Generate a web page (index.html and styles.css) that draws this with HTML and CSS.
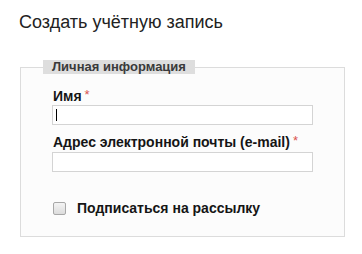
FILE: index.html
```html
<!DOCTYPE html>
<html lang="ru">
<head>
<meta charset="utf-8">
<link rel="stylesheet" href="styles.css">
</head>
<body>
<div class="page">
  <h1 class="title">Создать учётную запись</h1>
  <fieldset class="group">
    <legend class="group-legend">Личная информация</legend>
    <div class="group-body">
      <div class="field">
        <label class="field-label" for="name">Имя<span class="req">*</span></label>
        <div class="input-wrap">
          <input class="text-input" id="name" type="text">
          <span class="caret"></span>
        </div>
      </div>
      <div class="field field-email">
        <label class="field-label" for="email">Адрес электронной почты (e-mail)<span class="req">*</span></label>
        <div class="input-wrap">
          <input class="text-input" id="email" type="text">
        </div>
      </div>
      <div class="check-row">
        <input class="check" id="sub" type="checkbox">
        <label class="check-label" for="sub">Подписаться на рассылку</label>
      </div>
    </div>
  </fieldset>
</div>
</body>
</html>
```
FILE: styles.css
```css
html, body {
  margin: 0;
  padding: 0;
  background: #ffffff;
}
body {
  font-family: "Liberation Sans", Arial, sans-serif;
  color: #222;
}
.page {
  padding: 11px 17px 0 20px;
  width: 325px;
}
.title {
  margin: 0 0 27px -1px;
  font-size: 18px;
  line-height: 22px;
  font-weight: normal;
  color: #222;
}
.group {
  margin: 0;
  padding: 0 0 0 22px;
  border: 1px solid #dcdcdc;
  background: #fcfcfc;
  height: 177px;
  box-sizing: border-box;
}
.group-legend {
  padding: 0 9px;
  background: #dedede;
  color: #3a3a3a;
  font-size: 13px;
  font-weight: bold;
  line-height: 14px;
}
.group-body {
  padding: 13px 0 0 10px;
}
.field {
  display: flex;
  flex-direction: column;
}
.field-email {
  margin-top: 8px;
}
.field-label {
  font-size: 14px;
  font-weight: bold;
  line-height: 16px;
  color: #151515;
}
.req {
  color: #d9534f;
  font-weight: normal;
  margin-left: 3px;
  font-size: 13px;
  vertical-align: 2px;
}
.input-wrap {
  position: relative;
  margin-left: -1px;
  margin-top: 1px;
}
.field-email .input-wrap {
  margin-top: 2px;
}
.text-input {
  display: block;
  box-sizing: border-box;
  width: 261px;
  height: 20px;
  margin: 0;
  border: 1px solid #d4d4d4;
  background: #fff;
  padding: 0 4px;
  outline: none;
}
.caret {
  position: absolute;
  left: 4px;
  top: 4px;
  width: 1px;
  height: 12px;
  background: #000;
}
.check-row {
  display: flex;
  align-items: center;
  margin-top: 28px;
}
.check {
  appearance: none;
  -webkit-appearance: none;
  box-sizing: border-box;
  width: 13px;
  height: 13px;
  margin: 0 11px 0 0;
  border: 1px solid #a8a8a8;
  border-radius: 2px;
  background: linear-gradient(#f4f4f4, #dcdcdc);
}
.check-label {
  font-size: 14px;
  font-weight: bold;
  line-height: 16px;
  color: #151515;
}
```
